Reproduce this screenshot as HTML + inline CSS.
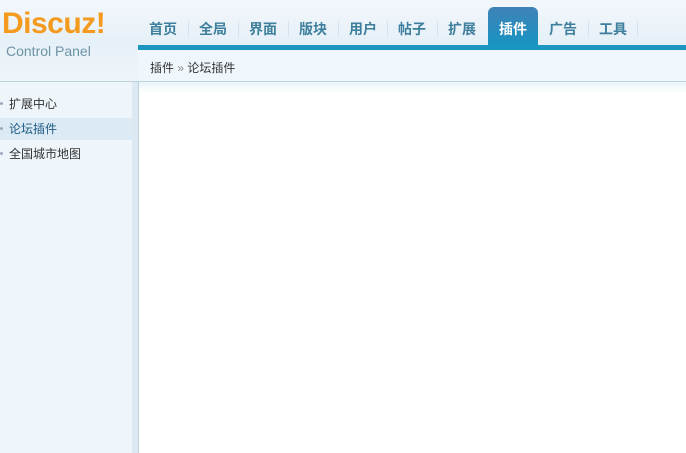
<!DOCTYPE html><html><head><meta charset="utf-8"><style>
body{margin:0;width:686px;height:453px;overflow:hidden;background:#fff;font-family:"Liberation Sans","Noto Sans CJK SC",sans-serif;position:relative}
.a{position:absolute}
.tab{position:absolute;top:19px;font-size:14px;font-weight:bold;color:#3d7f9c;width:50px;text-align:center}
.sep{position:absolute;top:21px;width:1px;height:16px;background:#d3e2ec}
.it{position:absolute;left:9px;font-size:12px;color:#333}
.dot{position:absolute;left:0;width:3px;height:3px;background:#9ab;border-radius:2px}
</style></head><body>
<div class="a" style="left:0;top:0;width:686px;height:82px;background:linear-gradient(#f3f8fc,#e6f0f7 50%,#eef5fa)"></div>
<div class="a" style="left:0;top:0;width:686px;height:15px;background:#f0f6fb"></div>
<div class="a" style="left:2px;top:7px;font-size:30px;font-weight:bold;color:#f49a1f;letter-spacing:-0.5px">Discuz!</div>
<div class="a" style="left:6px;top:43px;font-size:14px;color:#6d93a7">Control Panel</div>
<div class="a" style="left:138px;top:45px;width:548px;height:5px;background:#1a96c0"></div>
<div class="a" style="left:138px;top:50px;width:548px;height:32px;background:#f0f7fc"></div>
<div class="a" style="left:150px;top:59px;font-size:12px;color:#333">插件 <span style="color:#888">»</span> 论坛插件</div>
<div class="a" style="left:0;top:81px;width:686px;height:1px;background:#bcd3dc"></div>
<div class="a" style="left:138px;top:82px;width:548px;height:12px;background:linear-gradient(#eaf3f8,#fff)"></div>
<div class="a" style="left:488px;top:7px;width:50px;height:38px;background:linear-gradient(#3f82b6,#1993c2);border-radius:6px 6px 0 0"></div>
<div class="tab" style="left:138px">首页</div><div class="sep" style="left:188px"></div>
<div class="tab" style="left:188px">全局</div><div class="sep" style="left:238px"></div>
<div class="tab" style="left:238px">界面</div><div class="sep" style="left:288px"></div>
<div class="tab" style="left:288px">版块</div><div class="sep" style="left:338px"></div>
<div class="tab" style="left:338px">用户</div><div class="sep" style="left:387px"></div>
<div class="tab" style="left:387px">帖子</div><div class="sep" style="left:437px"></div>
<div class="tab" style="left:437px">扩展</div>
<div class="tab" style="left:488px;color:#fff">插件</div>
<div class="tab" style="left:538px">广告</div><div class="sep" style="left:588px"></div>
<div class="tab" style="left:588px">工具</div><div class="sep" style="left:637px"></div>
<div class="a" style="left:0;top:82px;width:132px;height:371px;background:#eff6fb"></div>
<div class="a" style="left:132px;top:82px;width:6px;height:371px;background:#dce9f3"></div>
<div class="a" style="left:138px;top:82px;width:1px;height:371px;background:#bcd3dc"></div>
<div class="a" style="left:0;top:118px;width:132px;height:22px;background:#dbeaf5"></div>
<div class="dot" style="top:102px"></div><div class="it" style="top:95px">扩展中心</div>
<div class="dot" style="top:127px"></div><div class="it" style="top:120px;color:#1d5a82">论坛插件</div>
<div class="dot" style="top:152px"></div><div class="it" style="top:145px">全国城市地图</div>
</body></html>
